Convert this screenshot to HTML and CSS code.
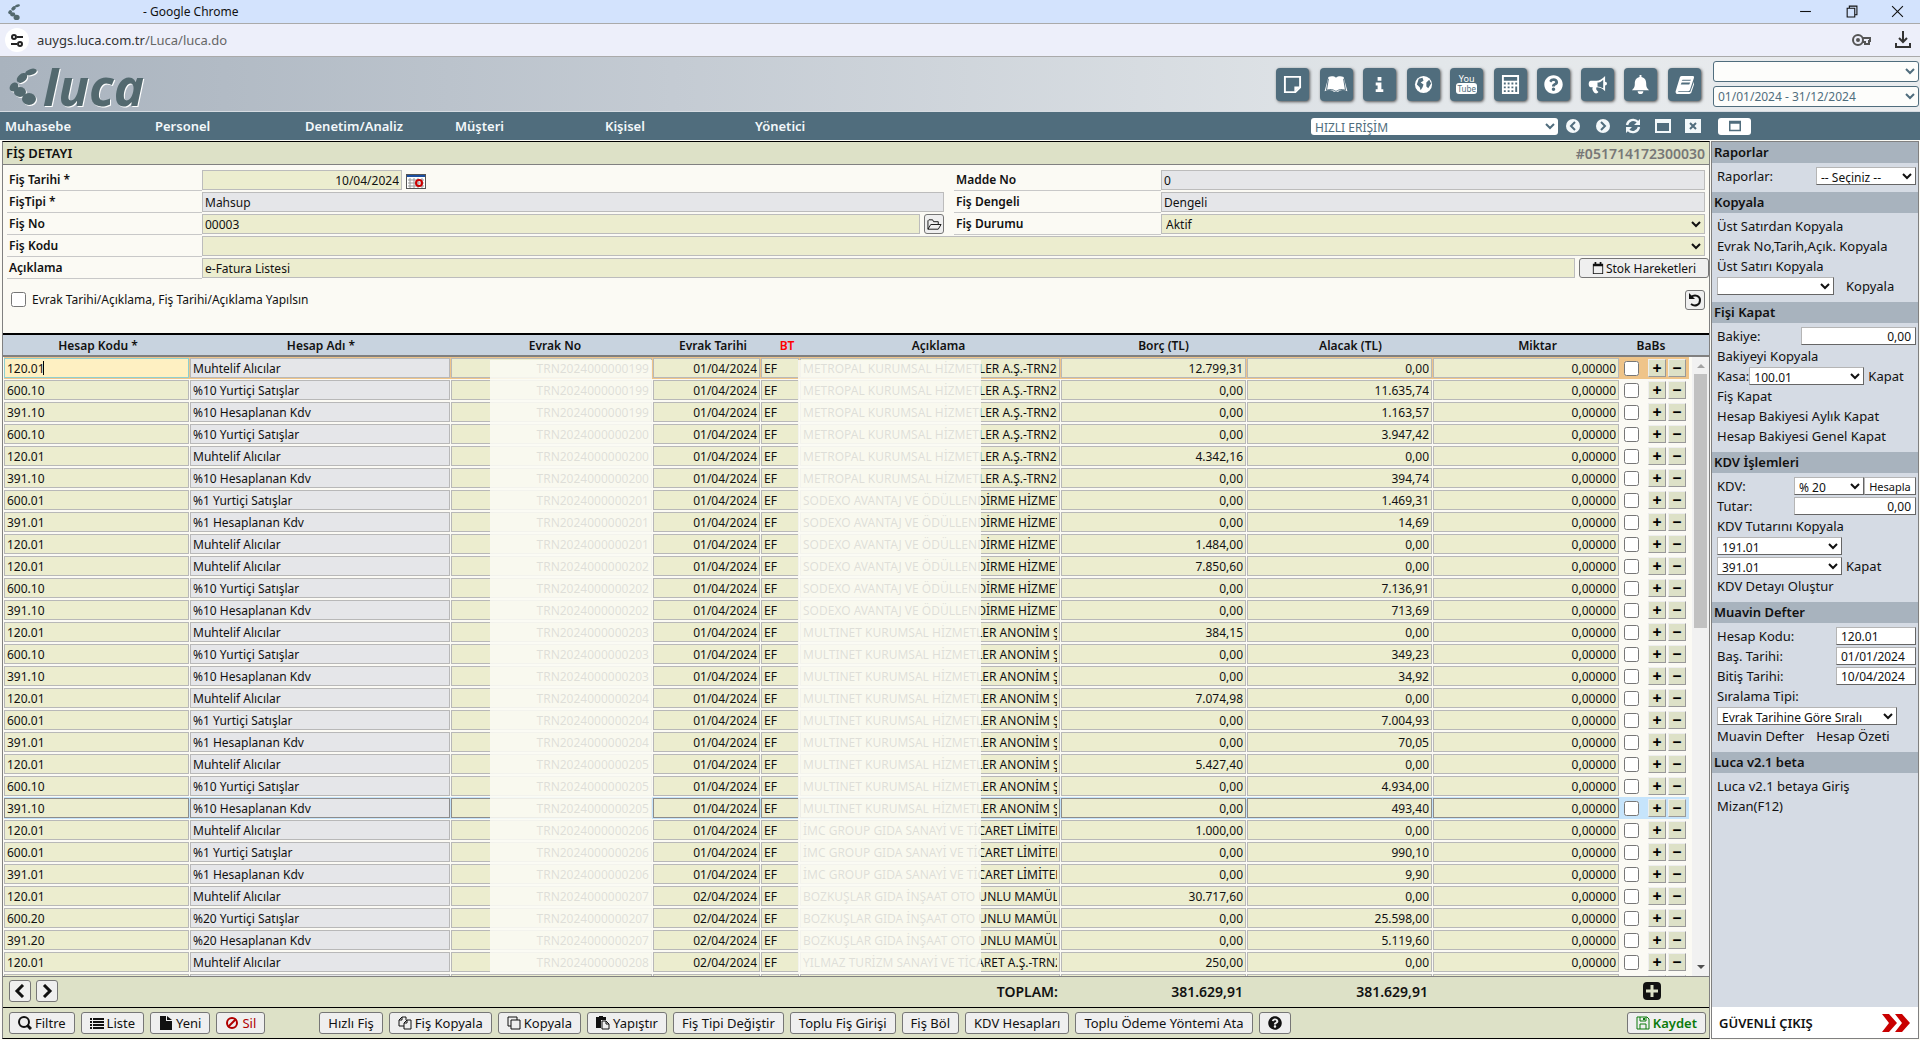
FILE: index.html
```html
<!DOCTYPE html>
<html lang="tr">
  <head>
    <meta charset="utf-8">
    <title>Luca</title>
    <link rel="stylesheet" href="styles.css">
  </head>
  <body>
    <svg class="sprite" aria-hidden="true">
      <symbol id="i-leaf" viewBox="0 0 28 37">
        <ellipse cx="22" cy="4" rx="6" ry="3" transform="rotate(-18 22 4)"/>
        <ellipse cx="13" cy="10" rx="6" ry="4" transform="rotate(-40 13 10)"/>
        <ellipse cx="5" cy="19" rx="5" ry="4" transform="rotate(-50 5 19)"/>
        <ellipse cx="11" cy="24" rx="6" ry="5"/>
        <ellipse cx="20" cy="31" rx="7" ry="6"/>
      </symbol>
      <symbol id="i-note" viewBox="0 0 20 20">
        <path d="M2 2h16v11l-5 5H2z" fill="none" stroke="currentColor" stroke-width="2"/>
        <path d="M12 18v-6h6z"/>
      </symbol>
      <symbol id="i-book" viewBox="0 0 24 20">
        <path d="M4 2c3-1 6-1 8 1 2-2 5-2 8-1l4 15c-5-2-8-1-10 1h-4c-2-2-5-3-10-1z"/>
        <path d="M4 4L2 16c4-1 7-1 9 1h2c2-2 5-2 9-1L20 4" fill="none" stroke="#506d7d"/>
      </symbol>
      <symbol id="i-info" viewBox="0 0 20 20">
        <path d="M8 2h4v4H8zM6 8h6v7h2v3H6v-3h2v-4H6z"/>
      </symbol>
      <symbol id="i-globe" viewBox="0 0 20 20">
        <circle cx="10" cy="10" r="9"/>
        <path d="M5 4l4-1 1 3-3 2 3 2-1 3-2 3-1-3-3-3zM13 8l3-3 2 4-3 5-2-2z" fill="#506d7d"/>
      </symbol>
      <symbol id="i-calc" viewBox="0 0 20 20">
        <path fill-rule="evenodd" d="M1 0h18v20H1zM3 2v4h14V2zM3 8v2h2V8zm4 0v2h2V8zm4 0v2h2V8zm4 0v2h2V8zM3 12v2h2v-2zm4 0v2h2v-2zm4 0v2h2v-2zm4 0v6h2v-6zM3 16v2h2v-2zm4 0v2h2v-2zm4 0v2h2v-2z"/>
      </symbol>
      <symbol id="i-help" viewBox="0 0 512 512">
        <path d="M504 256c0 136.997-111.043 248-248 248S8 392.997 8 256C8 119.083 119.043 8 256 8s248 111.083 248 248zM262.655 90c-54.497 0-89.255 22.957-116.549 63.758-3.536 5.286-2.353 12.415 2.715 16.258l34.699 26.31c5.205 3.947 12.621 3.008 16.665-2.122 17.864-22.658 30.113-35.797 57.303-35.797 20.429 0 45.698 13.148 45.698 32.958 0 14.976-12.363 22.667-32.534 33.976C247.128 238.528 216 254.941 216 296v4c0 6.627 5.373 12 12 12h56c6.627 0 12-5.373 12-12v-1.333c0-28.462 83.186-29.647 83.186-106.667 0-58.002-60.165-102-116.531-102zM256 338c-25.365 0-46 20.635-46 46 0 25.364 20.635 46 46 46s46-20.636 46-46c0-25.365-20.635-46-46-46z"/>
      </symbol>
      <symbol id="i-horn" viewBox="0 0 20 20">
        <path fill-rule="evenodd" d="M18 1v6a2 2 0 0 1 0 4v6c-3-3-6-4-9-4-1 2 0 3 2 5-1 2-4 2-5 0-1-2-2-3-1-5H3c-3 0-3-7 0-7h6c3 0 6-2 9-5zM10 8v4c2 0 4 1 6 2V5c-2 2-4 3-6 3z"/>
      </symbol>
      <symbol id="i-bell" viewBox="0 0 20 20">
        <path d="M9 0h2v2c4 1 5 4 5 7 0 4 1 5 3 7H1c2-2 3-3 3-7 0-3 1-6 5-7zM7 17h6c0 4-6 4-6 0z"/>
      </symbol>
      <symbol id="i-tome" viewBox="0 0 20 20">
        <path fill-rule="evenodd" d="M7 1h12c1 0 1 1 1 2l-4 12c0 1-1 2-2 2H4c-1 0-1 1 0 1h12l4-11c1 1 0 3 0 3l-3 9-2 1H3c-2 0-3-2-2-4L5 3c0-1 1-2 2-2zm1 4l-1 1h9l1-1zm-1 3l-1 2h9l1-2z"/>
      </symbol>
      <symbol id="i-prev" viewBox="0 0 16 16">
        <circle cx="8" cy="8" r="7"/>
        <path d="M10 4L6 8l4 4" fill="none" stroke="#506d7d" stroke-width="2"/>
      </symbol>
      <symbol id="i-next" viewBox="0 0 16 16">
        <circle cx="8" cy="8" r="7"/>
        <path d="M6 4l4 4-4 4" fill="none" stroke="#506d7d" stroke-width="2"/>
      </symbol>
      <symbol id="i-sync" viewBox="0 0 16 16">
        <path d="M2 7c1-5 7-7 11-3M14 9c-1 5-7 7-11 3" fill="none" stroke="currentColor" stroke-width="2.4"/>
        <path d="M15 1v6H9zM1 15V9h6z"/>
      </symbol>
      <symbol id="i-window" viewBox="0 0 16 16">
        <path fill-rule="evenodd" d="M0 1h16v14H0zM2 5v8h12V5z"/>
      </symbol>
      <symbol id="i-close" viewBox="0 0 16 16">
        <path d="M0 1h16v14H0z"/>
        <path d="M5 5l6 6M11 5l-6 6" stroke="#506d7d" stroke-width="2"/>
      </symbol>
      <symbol id="i-folder" viewBox="0 0 16 16">
        <path d="M1 13V4l1-1h4l1 2h5v3M1 13l3-5h11l-3 5z" fill="none" stroke="currentColor"/>
      </symbol>
      <symbol id="i-calendar" viewBox="0 0 14 14">
        <path fill-rule="evenodd" d="M1 2h2V0h2v2h4V0h2v2h2v12H1zM2 5v8h10V5z"/>
      </symbol>
      <symbol id="i-undo" viewBox="0 0 14 14">
        <path d="M3 4c4-3 9-1 9 3 0 5-5 7-9 4" fill="none" stroke="currentColor" stroke-width="2"/>
        <path d="M1 0v6h6z"/>
      </symbol>
      <symbol id="i-left" viewBox="0 0 12 14">
        <path d="M9 1L3 7l6 6" fill="none" stroke="currentColor" stroke-width="3"/>
      </symbol>
      <symbol id="i-right" viewBox="0 0 12 14">
        <path d="M3 1l6 6-6 6" fill="none" stroke="currentColor" stroke-width="3"/>
      </symbol>
      <symbol id="i-search" viewBox="0 0 14 14">
        <circle cx="6" cy="6" r="5" fill="none" stroke="currentColor" stroke-width="2"/>
        <path d="M9 9l4 4" stroke="currentColor" stroke-width="3"/>
      </symbol>
      <symbol id="i-list" viewBox="0 0 14 14">
        <path d="M0 2h2v2H0zM3 2h11v2H3zM0 5h2v2H0zM3 5h11v2H3zM0 8h2v2H0zM3 8h11v2H3zM0 11h2v2H0zM3 11h11v2H3z"/>
      </symbol>
      <symbol id="i-file" viewBox="0 0 14 14">
        <path d="M1 0h6v5h6v9H1zM8 0l5 4H8z"/>
      </symbol>
      <symbol id="i-ban" viewBox="0 0 14 14">
        <circle cx="7" cy="7" r="5" fill="none" stroke="currentColor" stroke-width="2"/>
        <path d="M3 11l8-8" stroke="currentColor" stroke-width="2"/>
      </symbol>
      <symbol id="i-files" viewBox="0 0 14 14">
        <path d="M6 10H1V4l3-3h4v3M4 1v3H1M6 7l3-3h4v9H6zM9 4v3H6" fill="none" stroke="currentColor"/>
      </symbol>
      <symbol id="i-clone" viewBox="0 0 14 14">
        <path d="M4 10H1V1h9v3M4 4h9v9H4z" fill="none" stroke="currentColor"/>
      </symbol>
      <symbol id="i-paste" viewBox="0 0 14 14">
        <path d="M0 1h3V0h4v1h3v3H5v8H0z"/>
        <path d="M6 5h4l3 3v5H6zM10 5v3h3" fill="none" stroke="currentColor"/>
      </symbol>
      <symbol id="i-save" viewBox="0 0 14 14">
        <path d="M1 1h10l2 2v10H1zM4 1v4h6V1M4 13V8h6v5" fill="none" stroke="currentColor"/>
        <path d="M7 2h2v2H7z"/>
      </symbol>
      <symbol id="i-plus" viewBox="0 0 18 18">
        <rect width="18" height="18" rx="4"/>
        <path d="M9 3v12M3 9h12" stroke="#dde1c7" stroke-width="3"/>
      </symbol>
    </svg>

    <!-- browser frame -->
    <div class="title-bar">
      <svg class="favicon"><use href="#i-leaf"/></svg>
      <span class="window-title">- Google Chrome</span>
      <svg class="window-button" viewBox="0 0 12 12"><path d="M1 6h10"/></svg>
      <svg class="window-button" viewBox="0 0 12 12"><path d="M2 3h7v8H2zM4 3V1h7v8H9"/></svg>
      <svg class="window-button" viewBox="0 0 12 12"><path d="M1 1l10 10M11 1L1 11"/></svg>
    </div>
    <div class="url-bar">
      <span class="site-info">
        <svg width="14" height="14" viewBox="0 0 14 14" fill="none" stroke="#222" stroke-width="2"><circle cx="4" cy="4" r="2"/><path d="M7 4h6M1 11h6"/><circle cx="10" cy="11" r="2"/></svg>
      </span>
      <span class="url">auygs.luca.com.tr<span class="url-path">/Luca/luca.do</span></span>
      <svg class="key" width="19" height="14" viewBox="0 0 19 14" fill="none" stroke="#555" stroke-width="2"><circle cx="6" cy="7" r="5"/><path d="M11 5h7v3h-1v3h-4V9h-2"/><circle cx="6" cy="7" r="1"/></svg>
      <svg width="18" height="18" viewBox="0 0 18 18" fill="none" stroke="#333" stroke-width="2"><path d="M9 0v11M5 7l4 4 4-4M2 12v4h14v-4"/></svg>
    </div>

    <header class="header">
      <a class="logo" href="#"><svg class="logo-leaf"><use href="#i-leaf"/></svg><span>luca</span></a>
      <div class="shortcuts">
        <button class="shortcut" aria-label="Notlar"><svg><use href="#i-note"/></svg></button>
        <button class="shortcut" aria-label="Kılavuz"><svg class="wide"><use href="#i-book"/></svg></button>
        <button class="shortcut" aria-label="Bilgi"><svg><use href="#i-info"/></svg></button>
        <button class="shortcut" aria-label="Web"><svg><use href="#i-globe"/></svg></button>
        <button class="shortcut youtube"><span>You</span><span class="tube">Tube</span></button>
        <button class="shortcut" aria-label="Hesap makinesi"><svg><use href="#i-calc"/></svg></button>
        <button class="shortcut" aria-label="Yardım"><svg><use href="#i-help"/></svg></button>
        <button class="shortcut" aria-label="Duyurular"><svg><use href="#i-horn"/></svg></button>
        <button class="shortcut" aria-label="Bildirimler"><svg><use href="#i-bell"/></svg></button>
        <button class="shortcut" aria-label="Mevzuat"><svg><use href="#i-tome"/></svg></button>
      </div>
      <div class="period">
        <select aria-label="Şirket"><option></option></select>
        <select aria-label="Dönem"><option>01/01/2024 - 31/12/2024</option></select>
      </div>
    </header>

    <nav class="menu">
      <a href="#">Muhasebe</a>
      <a href="#">Personel</a>
      <a href="#">Denetim/Analiz</a>
      <a href="#">Müşteri</a>
      <a href="#">Kişisel</a>
      <a href="#">Yönetici</a>
      <div class="menu-tools">
        <select class="quick" aria-label="Hızlı erişim"><option>HIZLI ERİŞİM</option></select>
        <button aria-label="Geri"><svg><use href="#i-prev"/></svg></button>
        <button aria-label="İleri"><svg><use href="#i-next"/></svg></button>
        <button aria-label="Yenile"><svg><use href="#i-sync"/></svg></button>
        <button aria-label="Pencere"><svg><use href="#i-window"/></svg></button>
        <button aria-label="Kapat"><svg><use href="#i-close"/></svg></button>
      </div>
      <div class="menu-side">
        <button class="panel-button" aria-label="Panel"><svg width="12" height="12"><use href="#i-window"/></svg></button>
      </div>
    </nav>

    <div class="page">
      <main class="main">
        <div class="main-title"><h1>FİŞ DETAYI</h1><span>#051714172300030</span></div>

        <form class="form">
          <label for="tarih">Fiş Tarihi *</label>
          <div class="field">
            <input id="tarih" class="date" value="10/04/2024">
            <button type="button" class="calendar" aria-label="Takvim">
              <svg width="18" height="13" viewBox="0 0 18 13"><path d="M0 1h19" stroke="#1b4fa0" stroke-width="2"/><path d="M1 5h16M1 8h16M1 11h16M3 3v10M7 3v10M11 3v10M15 3v10" stroke="#999"/><circle cx="12" cy="8" r="3" fill="none" stroke="#c00" stroke-width="2"/></svg>
            </button>
          </div>
          <label for="madde">Madde No</label>
          <div class="field"><input id="madde" value="0" readonly></div>

          <label for="tipi">FişTipi *</label>
          <div class="field"><input id="tipi" value="Mahsup" readonly></div>
          <label for="dengeli">Fiş Dengeli</label>
          <div class="field"><input id="dengeli" value="Dengeli" readonly></div>

          <label for="no">Fiş No</label>
          <div class="field">
            <input id="no" value="00003">
            <button type="button" class="square" aria-label="Aç"><svg width="15" height="15"><use href="#i-folder"/></svg></button>
          </div>
          <label for="durum">Fiş Durumu</label>
          <div class="field"><select id="durum"><option>Aktif</option></select></div>

          <label for="kod">Fiş Kodu</label>
          <div class="field full"><select id="kod"><option></option></select></div>

          <label for="aciklama">Açıklama</label>
          <div class="field full">
            <input id="aciklama" value="e-Fatura Listesi">
            <button type="button" class="stock"><svg width="12" height="12"><use href="#i-calendar"/></svg>Stok Hareketleri</button>
          </div>
        </form>
        <div class="options">
          <input type="checkbox" id="evrak">
          <label for="evrak">Evrak Tarihi/Açıklama, Fiş Tarihi/Açıklama Yapılsın</label>
          <button class="square" aria-label="Geri al"><svg width="14" height="14"><use href="#i-undo"/></svg></button>
        </div>

        <table class="head">
          <colgroup><col class="h-kod"><col class="h-ad"><col class="h-no"><col class="h-tarih"><col class="h-bt"><col><col class="h-tl"><col class="h-tl"><col class="h-miktar"><col class="h-babs"><col class="h-end"></colgroup>
          <thead>
            <tr>
              <th>Hesap Kodu *</th><th>Hesap Adı *</th><th>Evrak No</th><th>Evrak Tarihi</th><th class="bt">BT</th><th>Açıklama</th><th>Borç (TL)</th><th>Alacak (TL)</th><th>Miktar</th><th>BaBs</th><td></td>
            </tr>
          </thead>
        </table>
        <div class="lines">
          <div class="lines-table">
            <table class="rows">
              <colgroup><col class="c-kod"><col class="c-ad"><col class="c-no"><col class="c-tarih"><col class="c-bt"><col><col class="c-tl"><col class="c-tl"><col class="c-miktar"><col class="c-babs"><col class="c-buttons"></colgroup>
              <tbody id="rows"></tbody>
            </table>
            <div class="veil veil-no"></div>
            <div class="veil veil-text"></div>
          </div>
          <div class="scrollbar">
            <span class="arrow up"></span>
            <span class="thumb"></span>
            <span class="arrow down"></span>
          </div>
        </div>

        <div class="totals">
          <button class="page-button" aria-label="Önceki"><svg width="12" height="14"><use href="#i-left"/></svg></button>
          <button class="page-button" aria-label="Sonraki"><svg width="12" height="14"><use href="#i-right"/></svg></button>
          <b class="total-label">TOPLAM:</b>
          <b class="total">381.629,91</b>
          <b class="total">381.629,91</b>
          <button class="add" aria-label="Satır ekle"><svg width="18" height="18"><use href="#i-plus"/></svg></button>
        </div>

        <div class="toolbar">
          <button><svg><use href="#i-search"/></svg>Filtre</button>
          <button><svg><use href="#i-list"/></svg>Liste</button>
          <button><svg><use href="#i-file"/></svg>Yeni</button>
          <button class="delete"><svg><use href="#i-ban"/></svg>Sil</button>
          <button>Hızlı Fiş</button>
          <button><svg><use href="#i-files"/></svg>Fiş Kopyala</button>
          <button><svg><use href="#i-clone"/></svg>Kopyala</button>
          <button><svg><use href="#i-paste"/></svg>Yapıştır</button>
          <button>Fiş Tipi Değiştir</button>
          <button>Toplu Fiş Girişi</button>
          <button>Fiş Böl</button>
          <button>KDV Hesapları</button>
          <button>Toplu Ödeme Yöntemi Ata</button>
          <button aria-label="Yardım"><svg><use href="#i-help"/></svg></button>
          <button class="save"><svg><use href="#i-save"/></svg>Kaydet</button>
        </div>
      </main>

      <aside class="side">
        <section>
          <h2>Raporlar</h2>
          <div class="line"><label for="rapor">Raporlar:</label><select id="rapor" class="end w-100"><option>-- Seçiniz --</option></select></div>
        </section>
        <section>
          <h2>Kopyala</h2>
          <div class="line"><a href="#">Üst Satırdan Kopyala</a></div>
          <div class="line"><a href="#">Evrak No,Tarih,Açık. Kopyala</a></div>
          <div class="line"><a href="#">Üst Satırı Kopyala</a></div>
          <div class="line wide-gap"><select class="w-117" aria-label="Kopyalanacak alan"><option></option></select><a href="#">Kopyala</a></div>
        </section>
        <section>
          <h2>Fişi Kapat</h2>
          <div class="line"><label for="bakiye">Bakiye:</label><input id="bakiye" class="end number w-115" value="0,00"></div>
          <div class="line"><a href="#">Bakiyeyi Kopyala</a></div>
          <div class="line"><label for="kasa">Kasa:</label><select id="kasa" class="w-115"><option>100.01</option></select><a class="after" href="#">Kapat</a></div>
          <div class="line"><a href="#">Fiş Kapat</a></div>
          <div class="line"><a href="#">Hesap Bakiyesi Aylık Kapat</a></div>
          <div class="line"><a href="#">Hesap Bakiyesi Genel Kapat</a></div>
        </section>
        <section>
          <h2>KDV İşlemleri</h2>
          <div class="line"><label for="kdv">KDV:</label><select id="kdv" class="end w-70"><option>% 20</option></select><button class="calc">Hesapla</button></div>
          <div class="line"><label for="tutar">Tutar:</label><input id="tutar" class="end number w-122" value="0,00"></div>
          <div class="line"><a href="#">KDV Tutarını Kopyala</a></div>
          <div class="line"><select class="w-125" aria-label="İndirilecek KDV"><option>191.01</option></select></div>
          <div class="line"><select class="w-125" aria-label="Hesaplanan KDV"><option>391.01</option></select><a class="after" href="#">Kapat</a></div>
          <div class="line"><a href="#">KDV Detayı Oluştur</a></div>
        </section>
        <section>
          <h2>Muavin Defter</h2>
          <div class="line"><label for="hesap">Hesap Kodu:</label><input id="hesap" class="end w-80" value="120.01"></div>
          <div class="line"><label for="bas">Baş. Tarihi:</label><input id="bas" class="end w-80" value="01/01/2024"></div>
          <div class="line"><label for="bitis">Bitiş Tarihi:</label><input id="bitis" class="end w-80" value="10/04/2024"></div>
          <div class="line"><label for="sira">Sıralama Tipi:</label></div>
          <div class="line"><select id="sira" class="w-180"><option>Evrak Tarihine Göre Sıralı</option></select></div>
          <div class="line wide-gap"><a href="#">Muavin Defter</a><a href="#">Hesap Özeti</a></div>
        </section>
        <section>
          <h2>Luca v2.1 beta</h2>
          <div class="line"><a href="#">Luca v2.1 betaya Giriş</a></div>
          <div class="line"><a href="#">Mizan(F12)</a></div>
        </section>
        <a class="logout" href="#">GÜVENLİ ÇIKIŞ
          <svg width="28" height="18" viewBox="0 0 28 18" fill="#c90000"><path d="M0 0h7l8 9-8 9H0l7-9zM13 0h7l8 9-8 9h-7l7-9z"/></svg>
        </a>
      </aside>
    </div>
    <script src="script.js"></script>
  </body>
</html>
```

FILE: styles.css
```css
* {
  box-sizing: border-box;
}

body {
  margin: 0;
  height: 100vh;
  display: flex;
  flex-direction: column;
  overflow: hidden;
  background-color: #fbfaf4;
  color: #111;
  fill: currentColor;
  font-family: "Noto Sans", "Open Sans", sans-serif;
  font-size: 12px;
}

a {
  color: inherit;
  text-decoration: none;
}

button,
input,
select {
  font-family: inherit;
  font-size: 12px;
  color: inherit;
  margin: 0;
}

svg {
  flex: none;
}

.sprite {
  display: none;
}

/* browser frame */
.title-bar {
  display: flex;
  align-items: center;
  height: 24px;
  padding: 0 16px 0 6px;
  background-color: #d3e3fd;
  border-bottom: 1px solid #aaa;
}

.favicon {
  width: 16px;
  height: 16px;
  color: #53696f;
}

.window-title {
  flex: 1;
  padding-left: 121px;
}

.window-button {
  width: 13px;
  height: 13px;
  margin-left: 33px;
  fill: none;
  stroke: #111;
}

.url-bar {
  display: flex;
  align-items: center;
  height: 33px;
  padding: 0 8px 0 5px;
  background-color: #edeffa;
  border-bottom: 1px solid #aaa;
}

.site-info {
  display: flex;
  align-items: center;
  justify-content: center;
  width: 24px;
  height: 24px;
  border-radius: 50%;
  background-color: #fff;
}

.url {
  flex: 1;
  padding-left: 8px;
  font-size: 13px;
  color: #333;
}

.url-path {
  color: #666;
}

.key {
  margin-right: 23px;
}

/* header */
.header {
  display: flex;
  align-items: center;
  height: 55px;
  padding-right: 1px;
  background: linear-gradient(to right, #a9b3be, #c4cbd3 35%, #e3e7ea 75%, #eaecee);
  border-bottom: 1px solid #d5dbe1;
}

.logo {
  display: flex;
  align-items: center;
  gap: 6px;
  padding: 4px 0 0 9px;
  color: #53696f;
  font-size: 51px;
  font-weight: bold;
  font-style: italic;
  line-height: 50px;
  text-shadow: 1px 1px #fff;
}

.logo-leaf {
  width: 28px;
  height: 37px;
  filter: drop-shadow(1px 1px #fff);
}

.shortcuts {
  display: flex;
  justify-content: space-between;
  width: 425px;
  margin-left: auto;
}

.shortcut {
  display: flex;
  flex-direction: column;
  align-items: center;
  justify-content: center;
  width: 33px;
  height: 33px;
  padding: 0;
  border: 0;
  border-radius: 4px;
  background-color: #506d7d;
  color: #fff;
  box-shadow: 1px 1px 3px #555;
}

.shortcut svg {
  width: 19px;
  height: 19px;
}

.shortcut .wide {
  width: 24px;
}

.youtube {
  font-size: 9px;
  line-height: 9px;
}

.tube {
  padding: 1px;
  border-radius: 3px;
  background-color: #fff;
  color: #506d7d;
  font-size: 8px;
}

.period {
  display: flex;
  flex-direction: column;
  gap: 4px;
  width: 206px;
  margin-left: 12px;
}

.period select {
  height: 21px;
  border: 1px solid #506d7d;
  border-radius: 3px;
  background-color: #fdfdfb;
  color: #506d7d;
}

/* menu */
.menu {
  display: flex;
  align-items: center;
  height: 28px;
  padding-left: 5px;
  background-color: #506d7d;
  color: #f3f8fa;
}

.menu > a {
  width: 150px;
  font-size: 13px;
  font-weight: 600;
}

.menu-tools {
  display: flex;
  align-items: center;
  gap: 14px;
  margin-left: auto;
}

.menu-tools button {
  display: flex;
  padding: 0;
  border: 0;
  background: none;
}

.menu-tools svg {
  width: 16px;
  height: 16px;
}

.quick {
  width: 247px;
  height: 17px;
  margin-right: -7px;
  border: 0;
  border-radius: 3px;
  background-color: #fff;
  color: #506d7d;
}

.menu-side {
  width: 219px;
  padding-left: 17px;
}

.panel-button {
  display: flex;
  align-items: center;
  justify-content: center;
  width: 33px;
  height: 17px;
  border: 0;
  border-radius: 3px;
  background-color: #fff;
  color: #506d7d;
}

/* page */
.page {
  flex: 1;
  display: flex;
  min-height: 0;
  padding: 1px 1px 1px 2px;
}

.main {
  flex: 1;
  display: flex;
  flex-direction: column;
  min-width: 0;
  border: 1px solid #808080;
  border-top-color: #000;
  border-bottom-color: #000;
}

.main-title {
  display: flex;
  align-items: center;
  justify-content: space-between;
  height: 23px;
  padding: 0 4px 0 3px;
  background-color: #dde1c7;
  border-bottom: 1px solid #808080;
  font-size: 14px;
  font-weight: 600;
}

.main-title h1 {
  margin: 0;
  font-size: 13px;
  font-weight: 600;
}

.main-title span {
  color: #777;
}

.form {
  display: grid;
  grid-template-columns: 195px 1fr 207px 544px;
  grid-auto-rows: 22px;
  padding: 5px 4px 0 4px;
}

.form > label {
  height: 21px;
  padding-left: 2px;
  border-bottom: 1px solid #c8c8c8;
  font-weight: 600;
  line-height: 19px;
}

.field {
  display: flex;
  align-items: flex-start;
  gap: 4px;
}

.field input,
.field select {
  flex: 1;
  min-width: 0;
  height: 20px;
  padding: 0 2px;
  border: 1px solid #bcbcbc;
  border-radius: 0;
  background-color: #ecedcf;
}

.field input[readonly] {
  background-color: #e5e6e9;
}

.field select {
  padding: 0;
}

.field:nth-of-type(odd):not(.full) {
  margin-right: 10px;
}

.field.full {
  grid-column: span 3;
}

.field .date {
  flex: none;
  width: 200px;
  text-align: right;
}

.calendar {
  align-self: center;
  display: flex;
  padding: 0;
  border: 1px solid #555;
  background-color: #fff;
}

.square,
.stock,
.page-button,
.toolbar button {
  display: flex;
  align-items: center;
  justify-content: center;
  padding: 0;
  border: 1px solid #767676;
  border-radius: 3px;
  background-color: #efefef;
}

.square {
  width: 20px;
  height: 20px;
}

.stock {
  gap: 2px;
  width: 130px;
  height: 20px;
  margin-right: -4px;
}

.options {
  display: flex;
  align-items: center;
  height: 53px;
  padding: 0 4px 14px 8px;
}

.options input,
.rows input[type="checkbox"] {
  width: 15px;
  height: 15px;
}

.options label {
  flex: 1;
  padding-left: 6px;
}

/* line headings */
.head {
  width: 100%;
  table-layout: fixed;
  border-collapse: collapse;
  background-color: #c8d3df;
  border-top: 2px solid #000;
  border-bottom: 2px solid #808080;
}

.head th,
.head td {
  height: 22px;
  padding: 0 0 0 4px;
  font-weight: 600;
}

.head .bt {
  color: #f00;
}

.h-kod {
  width: 186px;
}

.h-ad {
  width: 260px;
}

.h-no {
  width: 208px;
}

.h-tarih {
  width: 108px;
}

.h-bt,
.h-babs,
.h-end {
  width: 40px;
}

.h-tl,
.h-miktar {
  width: 187px;
}

/* lines */
.lines {
  flex: 1;
  display: flex;
  min-height: 0;
  overflow: hidden;
}

.lines-table {
  position: relative;
  flex: 1;
  padding: 0 3px 0 1px;
}

.rows {
  width: 100%;
  table-layout: fixed;
  border-collapse: collapse;
}

.rows td {
  height: 22px;
  padding: 0 1px 0 0;
}

.c-kod,
.c-tl {
  width: 186px;
}

.c-ad {
  width: 261px;
}

.c-no {
  width: 202px;
}

.c-tarih {
  width: 108px;
}

.c-bt {
  width: 39px;
}

.c-miktar {
  width: 187px;
}

.c-babs {
  width: 28px;
}

.c-buttons {
  width: 41px;
}

.rows td > input:not([type="checkbox"]) {
  display: block;
  width: 100%;
  height: 20px;
  padding: 0 2px;
  border: 1px solid #b8b8b8;
  background-color: #ecedcf;
}

.rows td > .name:not([type="checkbox"]) {
  background-color: #e5e6e9;
}

.rows .number {
  text-align: right;
}

.rows input[type="checkbox"] {
  display: block;
  margin-left: 4px;
}

.rows .active {
  background-color: #efc489;
}

.rows .hover {
  background-color: #c6e4fb;
}

.rows .hover td > input:not([type="checkbox"]) {
  border-color: #8c8c8c;
}

.rows .active td > .code:not([type="checkbox"]) {
  border-color: #8ecfd0;
  background-color: #fef0c2;
}

/* text cursor of the line being edited */
.rows .active td:first-child {
  position: relative;
}

.rows .active td:first-child::after {
  content: "";
  position: absolute;
  top: 4px;
  left: 39px;
  width: 1px;
  height: 14px;
  background-color: #000;
}

.row-buttons {
  display: flex;
  gap: 2px;
}

.row-buttons button {
  width: 18px;
  height: 18px;
  padding: 0;
  border: 1px solid;
  border-color: #eee #999 #999 #eee;
  background-color: #dde1c7;
  color: #000;
  font-size: 16px;
  font-weight: bold;
  line-height: 14px;
}

/* hides customer details */
.veil {
  position: absolute;
  top: 3px;
  bottom: 4px;
  background-color: #fbfaf4;
  opacity: 0.88;
}

.veil-no {
  left: 487px;
  width: 162px;
}

.veil-text {
  left: 795px;
  right: 711px;
}

.scrollbar {
  display: flex;
  flex-direction: column;
  align-items: center;
  width: 17px;
  padding: 7px 0;
  background-color: #f1f1f1;
}

.arrow {
  border: 4px solid transparent;
}

.up {
  border-top: 0;
  border-bottom-color: #a3a3a3;
}

.down {
  margin-top: auto;
  border-bottom: 0;
  border-top-color: #505050;
}

.thumb {
  width: 13px;
  height: 42%;
  margin-top: 6px;
  background-color: #c1c1c1;
}

/* totals */
.totals {
  display: flex;
  align-items: center;
  gap: 5px;
  height: 31px;
  padding: 0 48px 2px 6px;
  background-color: #dde1c7;
  border-top: 1px solid #808080;
  font-size: 14px;
}

.totals b {
  font-weight: 600;
}

.page-button {
  width: 22px;
  height: 22px;
}

.total-label {
  margin-left: auto;
}

.total {
  width: 180px;
  text-align: right;
}

.add {
  display: flex;
  margin-left: 210px;
  padding: 0;
  border: 0;
  background: none;
}

.toolbar {
  display: flex;
  align-items: center;
  gap: 6px;
  height: 31px;
  padding: 0 3px 0 6px;
  background-color: #dde1c7;
  border-top: 1px solid #000;
}

.toolbar button {
  gap: 3px;
  height: 22px;
  padding: 0 8px;
  font-size: 13px;
}

.toolbar svg {
  width: 14px;
  height: 14px;
}

.toolbar .delete {
  margin-right: 48px;
  color: #b00000;
}

.toolbar .save {
  margin-left: auto;
  color: #0a7a0a;
  font-weight: 600;
}

/* side panel */
.side {
  display: flex;
  flex-direction: column;
  width: 208px;
  margin-left: 1px;
  background-color: #d5dbe4;
  border: 1px solid #808080;
  font-size: 13px;
}

.side section {
  padding-bottom: 6px;
}

.side h2 {
  height: 21px;
  margin: 0 0 3px;
  padding-left: 2px;
  background-color: #a8b3be;
  font-size: 13px;
  font-weight: 600;
  line-height: 21px;
}

.line {
  display: flex;
  align-items: center;
  height: 20px;
  padding: 0 2px 0 5px;
}

.wide-gap {
  gap: 12px;
}

.line input,
.line select,
.calc {
  height: 18px;
  padding: 0 4px;
  border: 1px solid;
  border-color: #b5b5b5 #666 #666 #b5b5b5;
  border-radius: 0;
  background-color: #fff;
}

.line select {
  padding: 0;
}

.line .end {
  margin-left: auto;
}

.line .number {
  text-align: right;
}

.after {
  padding-left: 4px;
}

.line .calc {
  padding: 0;
  width: 52px;
  font-size: 11px;
}

.w-70 {
  width: 70px;
}

.w-80 {
  width: 80px;
}

.w-100 {
  width: 100px;
}

.w-115 {
  width: 115px;
}

.w-117 {
  width: 117px;
}

.w-122 {
  width: 122px;
}

.w-125 {
  width: 125px;
}

.w-180 {
  width: 180px;
}

.logout {
  display: flex;
  align-items: center;
  justify-content: space-between;
  height: 31px;
  margin-top: auto;
  padding: 0 8px 0 7px;
  background-color: #fff;
  font-size: 13px;
  font-weight: 600;
}
```

FILE: script.js
```javascript
var names = {
    '120.01': 'Muhtelif Alıcılar',
    '600.10': '%10 Yurtiçi Satışlar',
    '391.10': '%10 Hesaplanan Kdv',
    '600.01': '%1 Yurtiçi Satışlar',
    '391.01': '%1 Hesaplanan Kdv',
    '600.20': '%20 Yurtiçi Satışlar',
    '391.20': '%20 Hesaplanan Kdv'
};

var metropal = 'METROPAL KURUMSAL HİZMETLER A.Ş.-TRN2024';
var sodexo = 'SODEXO AVANTAJ VE ÖDÜLLENDİRME HİZMETLERİ A.Ş.';
var multinet = 'MULTINET KURUMSAL HİZMETLER ANONİM ŞİRKETİ';
var imc = 'İMC GROUP GIDA SANAYİ VE TİCARET LİMİTED ŞİRKETİ';
var bozkuslar = 'BOZKUŞLAR GIDA İNŞAAT OTO UNLU MAMÜLLER';
var yilmaz = 'YILMAZ TURİZM SANAYİ VE TİCARET A.Ş.-TRN2024';

// account code, document number, description, debit, credit
var lines = [
    ['120.01', 199, metropal, '12.799,31', '0,00'],
    ['600.10', 199, metropal, '0,00', '11.635,74'],
    ['391.10', 199, metropal, '0,00', '1.163,57'],
    ['600.10', 200, metropal, '0,00', '3.947,42'],
    ['120.01', 200, metropal, '4.342,16', '0,00'],
    ['391.10', 200, metropal, '0,00', '394,74'],
    ['600.01', 201, sodexo, '0,00', '1.469,31'],
    ['391.01', 201, sodexo, '0,00', '14,69'],
    ['120.01', 201, sodexo, '1.484,00', '0,00'],
    ['120.01', 202, sodexo, '7.850,60', '0,00'],
    ['600.10', 202, sodexo, '0,00', '7.136,91'],
    ['391.10', 202, sodexo, '0,00', '713,69'],
    ['120.01', 203, multinet, '384,15', '0,00'],
    ['600.10', 203, multinet, '0,00', '349,23'],
    ['391.10', 203, multinet, '0,00', '34,92'],
    ['120.01', 204, multinet, '7.074,98', '0,00'],
    ['600.01', 204, multinet, '0,00', '7.004,93'],
    ['391.01', 204, multinet, '0,00', '70,05'],
    ['120.01', 205, multinet, '5.427,40', '0,00'],
    ['600.10', 205, multinet, '0,00', '4.934,00'],
    ['391.10', 205, multinet, '0,00', '493,40'],
    ['120.01', 206, imc, '1.000,00', '0,00'],
    ['600.01', 206, imc, '0,00', '990,10'],
    ['391.01', 206, imc, '0,00', '9,90'],
    ['120.01', 207, bozkuslar, '30.717,60', '0,00'],
    ['600.20', 207, bozkuslar, '0,00', '25.598,00'],
    ['391.20', 207, bozkuslar, '0,00', '5.119,60'],
    ['120.01', 208, yilmaz, '250,00', '0,00'],
    ['600.10', 208, yilmaz, '0,00', '0,00']
];

var cell = function(label, value, type) {
    return '<td><input class="' + type + '" aria-label="' + label + '" value="' + value + '"></td>';
}

var html = '';
lines.forEach(function(line, i) {
    var state = i === 0 ? 'active' : i === 20 ? 'hover' : '';
    html += '<tr class="' + state + '">' +
        cell('Hesap Kodu', line[0], 'code') +
        cell('Hesap Adı', names[line[0]], 'name') +
        cell('Evrak No', 'TRN2024000000' + line[1], 'number') +
        cell('Evrak Tarihi', (line[1] < 207 ? '01' : '02') + '/04/2024', 'number') +
        cell('BT', 'EF', 'text') +
        cell('Açıklama', line[2], 'text') +
        cell('Borç', line[3], 'number') +
        cell('Alacak', line[4], 'number') +
        cell('Miktar', '0,00000', 'number') +
        '<td><input type="checkbox" aria-label="BaBs"></td>' +
        '<td><div class="row-buttons"><button aria-label="Ekle">+</button><button aria-label="Sil">−</button></div></td>' +
        '</tr>';
});
document.getElementById('rows').innerHTML = html;
```
